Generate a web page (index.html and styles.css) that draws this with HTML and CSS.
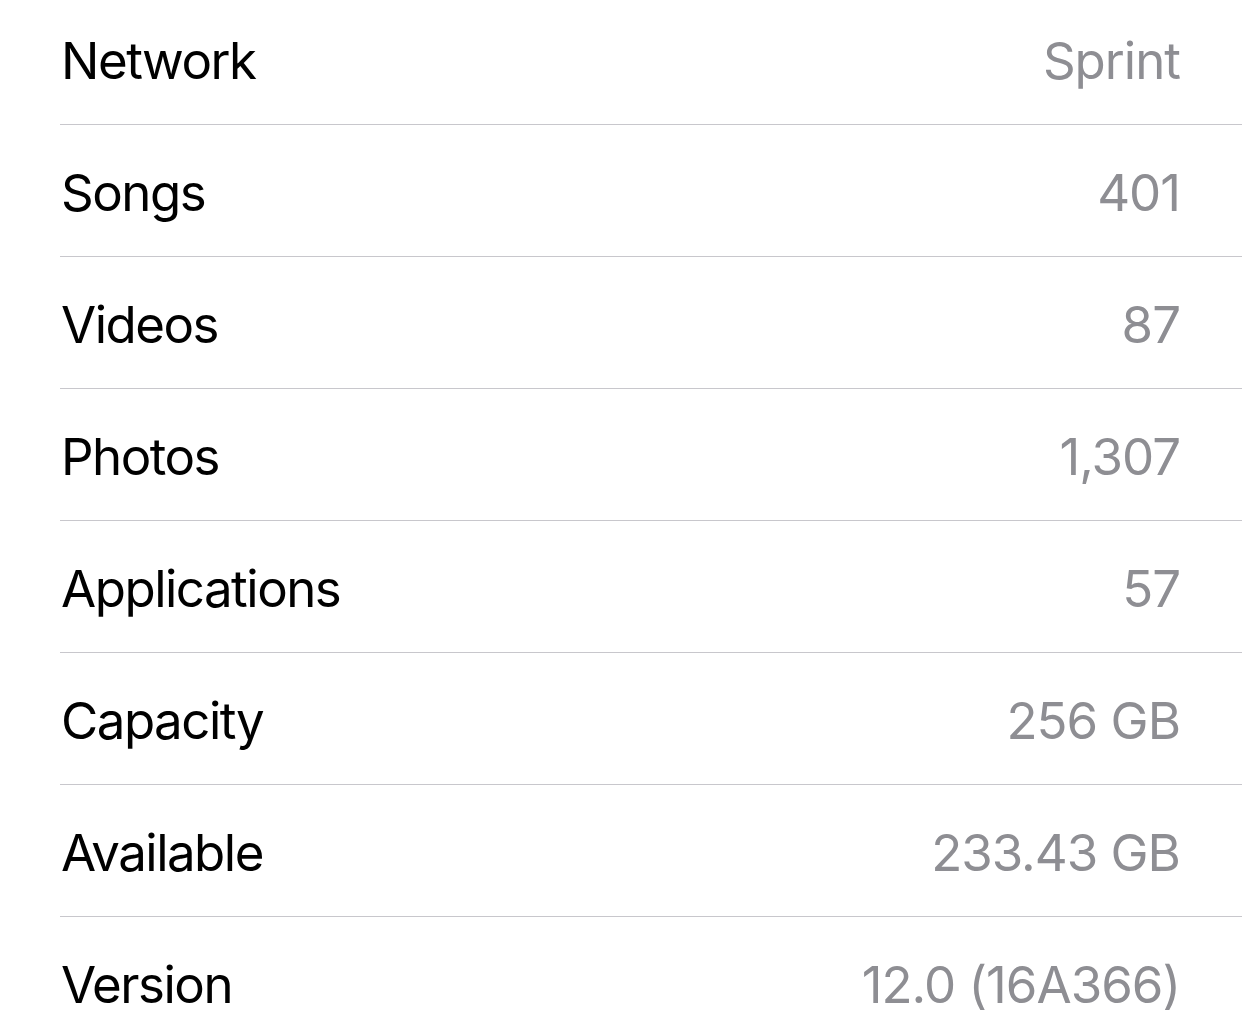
FILE: index.html
```
<!DOCTYPE html>
<html lang="en">
<head>
    <meta charset="UTF-8">
    <meta name="viewport" content="width=device-width, initial-scale=1.0">
    <title>About</title>
    <link rel="stylesheet" href="styles.css">
</head>
<body>
    <ul class="info-list">
        <li class="info-row"><span class="label">Network</span><span class="value">Sprint</span></li>
        <li class="info-row"><span class="label">Songs</span><span class="value">401</span></li>
        <li class="info-row"><span class="label">Videos</span><span class="value">87</span></li>
        <li class="info-row"><span class="label">Photos</span><span class="value">1,307</span></li>
        <li class="info-row"><span class="label">Applications</span><span class="value">57</span></li>
        <li class="info-row"><span class="label">Capacity</span><span class="value">256 GB</span></li>
        <li class="info-row"><span class="label">Available</span><span class="value">233.43 GB</span></li>
        <li class="info-row"><span class="label">Version</span><span class="value">12.0 (16A366)</span></li>
    </ul>
</body>
</html>
```

FILE: styles.css
```
html, body {
    margin: 0;
    padding: 0;
    background: #fff;
}
body {
    font-family: Inter, "Open Sans", sans-serif;
    overflow: hidden;
}
.info-list {
    list-style: none;
    margin: -7px 0 0 0;
    padding: 0 0 0 60px;
}
.info-row {
    display: flex;
    justify-content: space-between;
    align-items: center;
    box-sizing: border-box;
    height: 132px;
    padding: 4px 62px 0 0;
    border-bottom: 1px solid #c8c7cc;
    font-size: 51px;
}
.label {
    color: #000;
    padding-left: 1px;
    letter-spacing: -1.5px;
}
.value {
    color: #8e8e93;
    letter-spacing: -1px;
}
```
